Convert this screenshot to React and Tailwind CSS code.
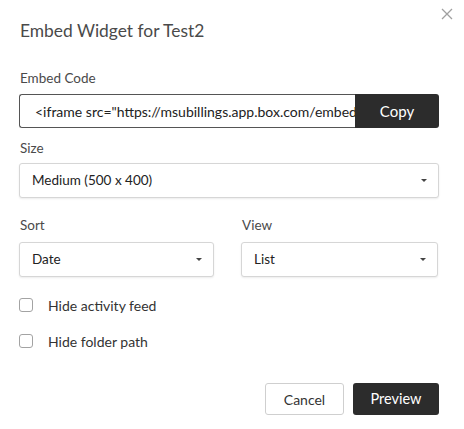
import { useState } from 'react';

const Caret = () => (
  <span className="h-0 w-0 border-x-[3px] border-t-[3px] border-x-transparent border-t-[#444]" />
);

const Select = ({ value, className = '' }) => (
  <div
    className={`flex h-[35px] items-center justify-between rounded-[3px] border border-[#d6d6d6] bg-white pl-[12px] pr-[11px] text-[13.5px] text-[#222] shadow-[0_1px_2px_rgba(0,0,0,0.08)] ${className}`}
  >
    <span>{value}</span>
    <Caret />
  </div>
);

const Check = ({ label, className = '' }) => {
  const [checked, setChecked] = useState(false);
  return (
    <label className={`flex h-[20px] cursor-pointer items-center ${className}`}>
      <span
        onClick={() => setChecked(!checked)}
        className={`h-[14px] w-[14px] rounded-[3px] border ${checked ? 'border-[#222] bg-[#222]' : 'border-[#a3a3a3] bg-white'}`}
      />
      <span className="ml-[15px] text-[14px] text-[#333]">{label}</span>
    </label>
  );
};

const App = () => {
  return (
    <div className="relative h-[429px] w-[464px] overflow-hidden bg-white pl-[19px] pr-[25px] font-['Lato',sans-serif]">
      <button className="absolute right-[10px] top-[7px] flex h-[14px] w-[14px] items-center justify-center text-[#a0a0a0]">
        <svg width="12" height="12" viewBox="0 0 12 12" fill="none" stroke="currentColor" strokeWidth="1.3">
          <path d="M1 1 L11 11 M11 1 L1 11" />
        </svg>
      </button>

      <h1 className="pl-[1px] pt-[19px] text-[17.4px] leading-[24px] text-[#4a4a4a]">Embed Widget for Test2</h1>

      <div className="mt-[26px] pl-[1px] text-[13.5px] leading-[18px] text-[#4a4a4a]">Embed Code</div>
      <div className="mt-[7px] flex h-[34px]">
        <div className="flex min-w-0 flex-1 items-center overflow-hidden whitespace-nowrap rounded-l-[3px] border border-r-0 border-[#555] bg-white pl-[15px] text-[14px] text-[#222]">
          &lt;iframe src="https://msubillings.app.box.com/embed_widget/s/test2"
        </div>
        <button className="w-[84px] shrink-0 rounded-r-[3px] bg-[#2c2c2c] text-[15px] text-white">Copy</button>
      </div>

      <div className="mt-[11px] pl-[1px] text-[13.5px] leading-[18px] text-[#4a4a4a]">Size</div>
      <Select value="Medium (500 x 400)" className="mt-[6px]" />

      <div className="mt-[18px] grid grid-cols-[195px_197px] gap-x-[27px]">
        <div>
          <div className="pl-[1px] text-[13.5px] leading-[18px] text-[#4a4a4a]">Sort</div>
          <Select value="Date" className="mt-[8px]" />
        </div>
        <div>
          <div className="pl-[1px] text-[13.5px] leading-[18px] text-[#4a4a4a]">View</div>
          <Select value="List" className="mt-[8px]" />
        </div>
      </div>

      <Check label="Hide activity feed" className="mt-[18px]" />
      <Check label="Hide folder path" className="mt-[16px]" />

      <div className="mt-[32px] flex justify-end gap-[9px]">
        <button className="h-[32px] w-[79px] rounded-[3px] border border-[#cfcfcf] bg-white text-[14px] text-[#333]">Cancel</button>
        <button className="h-[32px] w-[86px] rounded-[3px] bg-[#2c2c2c] text-[14.5px] text-white">Preview</button>
      </div>
    </div>
  );
};

export default App;
